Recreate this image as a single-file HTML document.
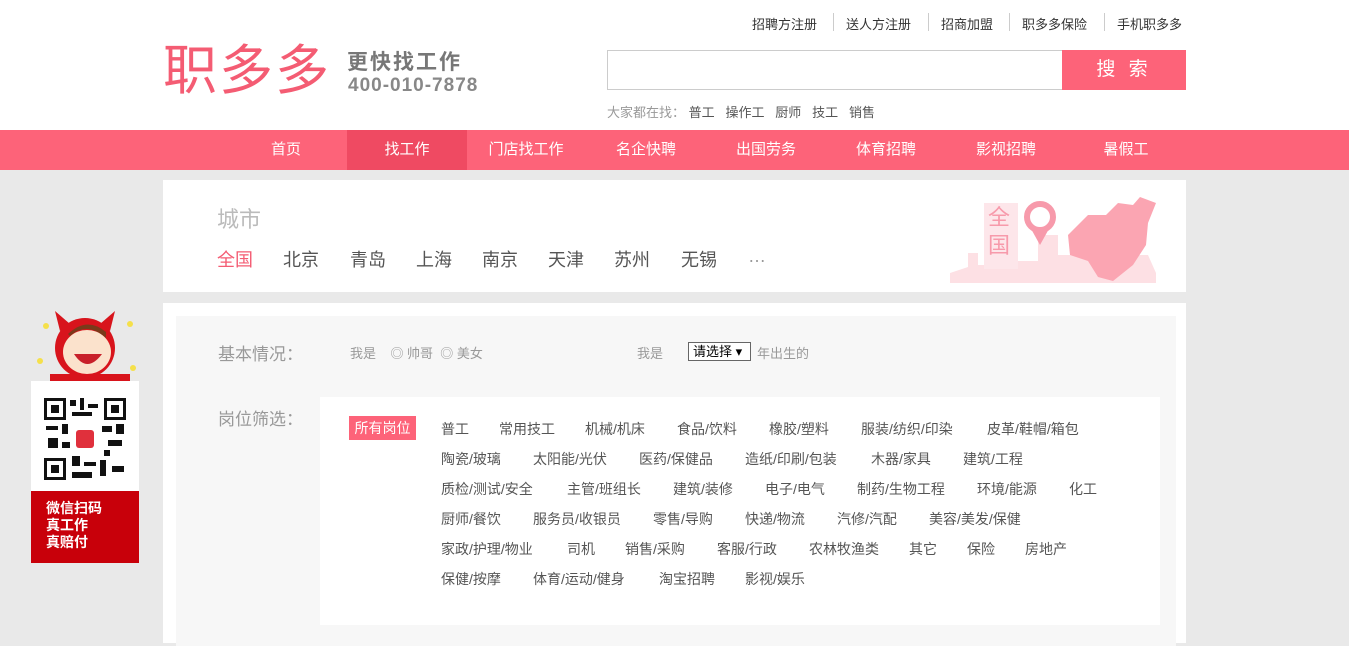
<!DOCTYPE html>
<html><head><meta charset="utf-8"><style>
*{margin:0;padding:0;box-sizing:border-box}
body{width:1349px;height:637px;overflow:hidden;background:#e9e9e9;font-family:"Liberation Sans","Noto Sans CJK SC",sans-serif;position:relative;color:#555}
.a{position:absolute;white-space:nowrap}
#top{position:absolute;left:0;top:0;width:1349px;height:130px;background:#fff}
.tl{font-size:13px;color:#333;top:14px}
.sep{position:absolute;top:13px;width:1px;height:18px;background:#ccc}
#nav{position:absolute;left:0;top:130px;width:1349px;height:40px;background:#fd6379}
.ni{position:absolute;top:0;width:120px;height:40px;line-height:40px;text-align:center;color:#fff;font-size:15px}
.j{position:absolute;font-size:14px;color:#555;white-space:nowrap}
</style></head><body>
<div id="top">
<div class="a tl" style="left:752px">招聘方注册</div><div class="sep" style="left:833px"></div>
<div class="a tl" style="left:846px">送人方注册</div><div class="sep" style="left:928px"></div>
<div class="a tl" style="left:941px">招商加盟</div><div class="sep" style="left:1009px"></div>
<div class="a tl" style="left:1022px">职多多保险</div><div class="sep" style="left:1104px"></div>
<div class="a tl" style="left:1117px">手机职多多</div>
<div class="a" style="left:163px;top:44px;font-size:54px;line-height:54px;color:#f45c73;font-weight:normal;letter-spacing:2px">职多多</div>
<div class="a" style="left:347px;top:52px;font-size:21px;line-height:22px;font-weight:bold;color:#777;letter-spacing:2px">更快找工作</div>
<div class="a" style="left:348px;top:76px;font-size:19px;line-height:20px;font-weight:bold;color:#888;letter-spacing:1px">400-010-7878</div>
<div class="a" style="left:607px;top:50px;width:456px;height:40px;border:1px solid #ccc;border-right:none"></div>
<div class="a" style="left:1062px;top:50px;width:124px;height:40px;background:#fd6379;color:#fff;font-size:19px;text-align:center;line-height:40px;letter-spacing:4px">搜 索</div>
<div class="a" style="left:607px;top:102px;font-size:13px;color:#999">大家都在找： <span style="color:#555">普工 &nbsp; 操作工 &nbsp; 厨师 &nbsp; 技工 &nbsp; 销售</span></div>
</div>
<div id="nav">
<div class="ni" style="left:226px">首页</div>
<div class="ni" style="left:347px;background:#ef4a62">找工作</div>
<div class="ni" style="left:466px">门店找工作</div>
<div class="ni" style="left:586px">名企快聘</div>
<div class="ni" style="left:706px">出国劳务</div>
<div class="ni" style="left:826px">体育招聘</div>
<div class="ni" style="left:946px">影视招聘</div>
<div class="ni" style="left:1066px">暑假工</div>
</div>
<div class="a" style="left:163px;top:180px;width:1023px;height:112px;background:#fff"></div>
<div class="a" style="left:217px;top:202px;font-size:22px;color:#bbb">城市</div>
<div class="a" style="left:217px;top:246px;font-size:18px;color:#f45c73">全国</div>
<div class="a" style="left:283px;top:246px;font-size:18px;color:#555">北京</div>
<div class="a" style="left:350px;top:246px;font-size:18px;color:#555">青岛</div>
<div class="a" style="left:416px;top:246px;font-size:18px;color:#555">上海</div>
<div class="a" style="left:482px;top:246px;font-size:18px;color:#555">南京</div>
<div class="a" style="left:548px;top:246px;font-size:18px;color:#555">天津</div>
<div class="a" style="left:614px;top:246px;font-size:18px;color:#555">苏州</div>
<div class="a" style="left:681px;top:246px;font-size:18px;color:#555">无锡</div>
<div class="a" style="left:748px;top:246px;font-size:18px;color:#999">…</div>
<svg class="a" style="left:948px;top:195px" width="210" height="92">
<path d="M2 88 L2 78 L20 72 L20 58 L30 58 L30 70 L50 70 L50 40 L60 40 L60 66 L90 66 L90 40 L110 40 L110 60 L200 60 L208 78 L208 88Z" fill="#fde0e4"/>
<rect x="36" y="8" width="34" height="66" fill="#fde6ea"/>
<text x="40" y="30" font-size="22" fill="#f79aab" font-family="Noto Sans CJK SC">全</text>
<text x="40" y="58" font-size="22" fill="#f79aab" font-family="Noto Sans CJK SC">国</text>
<circle cx="92" cy="22" r="13" fill="none" stroke="#f79aab" stroke-width="6"/>
<path d="M82 32 L92 50 L102 32Z" fill="#f79aab"/>
<path d="M120 40 L140 20 L158 20 L170 8 L185 10 L192 2 L208 8 L200 28 L198 50 L185 70 L165 86 L150 82 L140 66 L122 60Z" fill="#fba5b2"/>
</svg>
<div class="a" style="left:163px;top:303px;width:1023px;height:340px;background:#fff"></div>
<div class="a" style="left:176px;top:316px;width:1000px;height:330px;background:#f7f7f7"></div>
<div class="a" style="left:320px;top:397px;width:840px;height:228px;background:#fff"></div>
<div class="a" style="left:218px;top:340px;font-size:17px;color:#999">基本情况：</div>
<div class="a" style="left:350px;top:343px;font-size:13px;color:#999">我是 &nbsp; &nbsp;◎ 帅哥 &nbsp;◎ 美女</div>
<div class="a" style="left:637px;top:343px;font-size:13px;color:#999">我是</div>
<div class="a" style="left:688px;top:342px;width:63px;height:19px;border:1px solid #666;background:#fff;font-size:13px;color:#000;padding-left:4px;line-height:17px">请选择 ▾</div>
<div class="a" style="left:757px;top:343px;font-size:13px;color:#999">年出生的</div>
<div class="a" style="left:218px;top:405px;font-size:17px;color:#999">岗位筛选：</div>
<div class="a" style="left:349px;top:416px;width:67px;height:24px;background:#fd6379;color:#fff;font-size:14px;text-align:center;line-height:24px">所有岗位</div>
<div class="j" style="left:441px;top:419px">普工</div><div class="j" style="left:499px;top:419px">常用技工</div><div class="j" style="left:585px;top:419px">机械/机床</div><div class="j" style="left:677px;top:419px">食品/饮料</div><div class="j" style="left:769px;top:419px">橡胶/塑料</div><div class="j" style="left:861px;top:419px">服装/纺织/印染</div><div class="j" style="left:987px;top:419px">皮革/鞋帽/箱包</div>
<div class="j" style="left:441px;top:449px">陶瓷/玻璃</div><div class="j" style="left:533px;top:449px">太阳能/光伏</div><div class="j" style="left:639px;top:449px">医药/保健品</div><div class="j" style="left:745px;top:449px">造纸/印刷/包装</div><div class="j" style="left:871px;top:449px">木器/家具</div><div class="j" style="left:963px;top:449px">建筑/工程</div>
<div class="j" style="left:441px;top:479px">质检/测试/安全</div><div class="j" style="left:567px;top:479px">主管/班组长</div><div class="j" style="left:673px;top:479px">建筑/装修</div><div class="j" style="left:765px;top:479px">电子/电气</div><div class="j" style="left:857px;top:479px">制药/生物工程</div><div class="j" style="left:977px;top:479px">环境/能源</div><div class="j" style="left:1069px;top:479px">化工</div>
<div class="j" style="left:441px;top:509px">厨师/餐饮</div><div class="j" style="left:533px;top:509px">服务员/收银员</div><div class="j" style="left:653px;top:509px">零售/导购</div><div class="j" style="left:745px;top:509px">快递/物流</div><div class="j" style="left:837px;top:509px">汽修/汽配</div><div class="j" style="left:929px;top:509px">美容/美发/保健</div>
<div class="j" style="left:441px;top:539px">家政/护理/物业</div><div class="j" style="left:567px;top:539px">司机</div><div class="j" style="left:625px;top:539px">销售/采购</div><div class="j" style="left:717px;top:539px">客服/行政</div><div class="j" style="left:809px;top:539px">农林牧渔类</div><div class="j" style="left:909px;top:539px">其它</div><div class="j" style="left:967px;top:539px">保险</div><div class="j" style="left:1025px;top:539px">房地产</div>
<div class="j" style="left:441px;top:569px">保健/按摩</div><div class="j" style="left:533px;top:569px">体育/运动/健身</div><div class="j" style="left:659px;top:569px">淘宝招聘</div><div class="j" style="left:745px;top:569px">影视/娱乐</div>
<svg class="a" style="left:30px;top:306px" width="110" height="80">
<circle cx="55" cy="42" r="30" fill="#d8141c"/>
<path d="M30 25 L25 5 L40 18Z M80 25 L85 5 L70 18Z" fill="#d8141c"/>
<ellipse cx="57" cy="46" rx="24" ry="22" fill="#fbe2cc"/>
<path d="M40 30 Q57 15 76 32 L76 26 Q57 10 38 28Z" fill="#7a3a1a"/>
<path d="M44 48 Q57 68 72 48Z" fill="#c8202a"/>
<circle cx="16" cy="20" r="3" fill="#f5e04a"/><circle cx="10" cy="55" r="3" fill="#f5e04a"/><circle cx="100" cy="18" r="3" fill="#f5e04a"/><circle cx="103" cy="62" r="3" fill="#f5e04a"/>
<rect x="20" y="68" width="80" height="12" fill="#d8141c"/>
</svg>
<div class="a" style="left:31px;top:381px;width:108px;height:110px;background:#fff"></div>
<svg class="a" style="left:42px;top:396px" width="86" height="86">
<rect width="86" height="86" fill="#fff"/>
<g fill="#111">
<rect x="2" y="2" width="22" height="22"/><rect x="62" y="2" width="22" height="22"/><rect x="2" y="62" width="22" height="22"/>
</g>
<g fill="#fff"><rect x="5" y="5" width="16" height="16"/><rect x="65" y="5" width="16" height="16"/><rect x="5" y="65" width="16" height="16"/></g>
<g fill="#111"><rect x="9" y="9" width="8" height="8"/><rect x="69" y="9" width="8" height="8"/><rect x="9" y="69" width="8" height="8"/>
<rect x="28" y="4" width="6" height="6"/><rect x="38" y="2" width="4" height="12"/><rect x="46" y="8" width="10" height="4"/><rect x="30" y="16" width="20" height="4"/>
<rect x="4" y="30" width="12" height="4"/><rect x="20" y="28" width="6" height="10"/><rect x="6" y="42" width="10" height="10"/><rect x="20" y="46" width="8" height="6"/>
<rect x="60" y="30" width="10" height="6"/><rect x="74" y="28" width="8" height="10"/><rect x="66" y="44" width="14" height="6"/><rect x="62" y="54" width="6" height="6"/>
<rect x="30" y="60" width="8" height="10"/><rect x="42" y="66" width="12" height="4"/><rect x="30" y="76" width="20" height="6"/><rect x="58" y="64" width="6" height="16"/><rect x="70" y="70" width="12" height="6"/></g>
<rect x="34" y="34" width="18" height="18" rx="3" fill="#e0303c"/>
</svg>
<div class="a" style="left:31px;top:491px;width:108px;height:72px;background:#c8000a;color:#fff;font-size:14px;font-weight:bold;line-height:17px;padding:9px 0 0 15px;white-space:normal">微信扫码<br>真工作<br>真赔付</div>
</body></html>
